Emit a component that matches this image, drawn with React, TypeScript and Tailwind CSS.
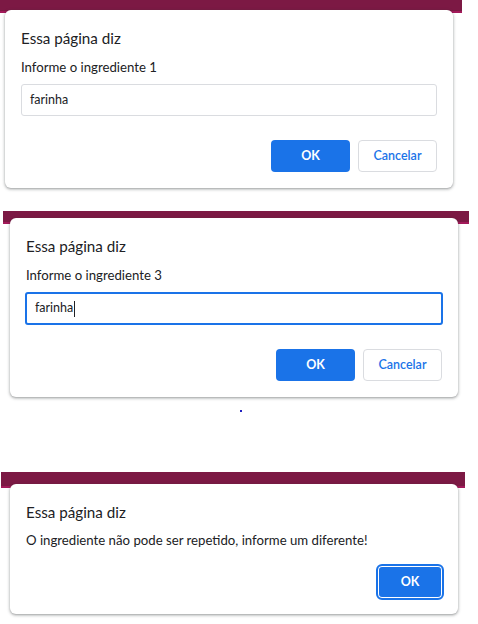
const font = { fontFamily: '"Segoe UI", Lato, "Noto Sans", sans-serif' };

const card =
  'w-[448px] rounded-[6px] bg-white px-4 pt-[17px] pb-4 shadow-[0_1px_3px_1px_rgba(60,64,67,0.2),0_1px_2px_rgba(60,64,67,0.3)]';

function Bar({ className }: { className: string }) {
  return <div className={`bg-[#7c1944] border-b-[2px] border-[#a3195a] ${className}`} />;
}

function Buttons({ cancel = true }: { cancel?: boolean }) {
  return (
    <div className="flex justify-end gap-2">
      <button
        className={`h-8 rounded-[4px] bg-[#1a73e8] text-[12.5px] font-bold text-white ${
          cancel ? 'w-[79px]' : 'w-[64px] outline-2 outline-[#1a73e8] ring-1 ring-inset ring-white'
        }`}
      >
        OK
      </button>
      {cancel && (
        <button className="h-8 w-[79px] rounded-[4px] border border-[#dadce0] bg-white text-[12.5px] font-semibold text-[#1a73e8]">
          Cancelar
        </button>
      )}
    </div>
  );
}

export default function App() {
  return (
    <div className="h-[624px] w-[478px] overflow-hidden bg-white text-[#202124]" style={font}>
      {/* primeiro prompt */}
      <div>
        <Bar className="h-[13px] w-[462px]" />
        <div className={`-mt-[3px] ml-[5px] ${card}`}>
          <h2 className="text-[15.2px] leading-[22px]">Essa página diz</h2>
          <p className="mt-[8px] text-[13.2px] leading-[20px]">Informe o ingrediente 1</p>
          <div className="mt-[7px] flex h-8 items-center rounded-[3px] border border-[#dadce0] px-2 text-[12.5px]">
            farinha
          </div>
          <div className="mt-6">
            <Buttons />
          </div>
        </div>
      </div>

      {/* segundo prompt */}
      <div className="mt-[23px]">
        <Bar className="ml-[3px] h-[13px] w-[466px]" />
        <div className={`-mt-[6px] ml-[10px] ${card}`}>
          <h2 className="text-[15.2px] leading-[22px]">Essa página diz</h2>
          <p className="mt-[8px] text-[13.2px] leading-[20px]">Informe o ingrediente 3</p>
          <div className="mt-[7px] -mx-px flex h-[33px] items-center rounded-[3px] border-2 border-[#1a73e8] px-2 text-[12.5px]">
            farinha<span className="ml-px inline-block h-[16px] w-px bg-[#202124]" />
          </div>
          <div className="mt-6">
            <Buttons />
          </div>
        </div>
        <div className="ml-[240px] mt-[13px] h-[2px] w-[2px] bg-[#2020c0]" />
      </div>

      {/* alerta */}
      <div className="mt-[60px]">
        <Bar className="ml-px h-[16px] w-[464px]" />
        <div className={`-mt-[4px] ml-[10px] ${card}`}>
          <h2 className="text-[15.2px] leading-[22px]">Essa página diz</h2>
          <p className="mt-[7px] text-[13.2px] leading-[20px]">O ingrediente não pode ser repetido, informe um diferente!</p>
          <div className="mt-[16px]">
            <Buttons cancel={false} />
          </div>
        </div>
      </div>
    </div>
  );
}
